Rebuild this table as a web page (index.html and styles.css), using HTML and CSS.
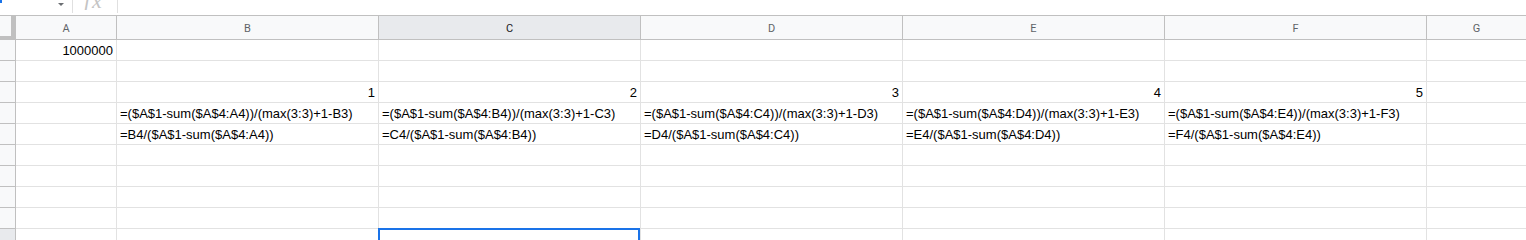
FILE: index.html
```html
<!DOCTYPE html>
<html>
<head>
<meta charset="utf-8">
<link rel="stylesheet" href="styles.css">
</head>
<body>
<div class="toolbar">
  <div class="namebox"><span class="focus"></span><span class="caret"></span></div>
  <div class="sep"></div>
  <div class="fx">fx</div>
  <div class="sep"></div>
</div>
<div class="sheet">
  <div class="corner"></div>
  <div class="ch">A</div>
  <div class="ch">B</div>
  <div class="ch ch-sel">C</div>
  <div class="ch">D</div>
  <div class="ch">E</div>
  <div class="ch">F</div>
  <div class="ch ch-last">G</div>

  <div class="rh"></div>
  <div class="cell num">1000000</div>
  <div class="cell"></div><div class="cell"></div><div class="cell"></div><div class="cell"></div><div class="cell"></div><div class="cell last"></div>

  <div class="rh"></div>
  <div class="cell"></div><div class="cell"></div><div class="cell"></div><div class="cell"></div><div class="cell"></div><div class="cell"></div><div class="cell last"></div>

  <div class="rh"></div>
  <div class="cell"></div>
  <div class="cell num">1</div>
  <div class="cell num">2</div>
  <div class="cell num">3</div>
  <div class="cell num">4</div>
  <div class="cell num">5</div>
  <div class="cell last"></div>

  <div class="rh"></div>
  <div class="cell"></div>
  <div class="cell">=($A$1-sum($A$4:A4))/(max(3:3)+1-B3)</div>
  <div class="cell">=($A$1-sum($A$4:B4))/(max(3:3)+1-C3)</div>
  <div class="cell">=($A$1-sum($A$4:C4))/(max(3:3)+1-D3)</div>
  <div class="cell">=($A$1-sum($A$4:D4))/(max(3:3)+1-E3)</div>
  <div class="cell">=($A$1-sum($A$4:E4))/(max(3:3)+1-F3)</div>
  <div class="cell last"></div>

  <div class="rh"></div>
  <div class="cell"></div>
  <div class="cell">=B4/($A$1-sum($A$4:A4))</div>
  <div class="cell">=C4/($A$1-sum($A$4:B4))</div>
  <div class="cell">=D4/($A$1-sum($A$4:C4))</div>
  <div class="cell">=E4/($A$1-sum($A$4:D4))</div>
  <div class="cell">=F4/($A$1-sum($A$4:E4))</div>
  <div class="cell last"></div>

  <div class="rh"></div>
  <div class="cell"></div><div class="cell"></div><div class="cell"></div><div class="cell"></div><div class="cell"></div><div class="cell"></div><div class="cell last"></div>

  <div class="rh"></div>
  <div class="cell"></div><div class="cell"></div><div class="cell"></div><div class="cell"></div><div class="cell"></div><div class="cell"></div><div class="cell last"></div>

  <div class="rh"></div>
  <div class="cell"></div><div class="cell"></div><div class="cell"></div><div class="cell"></div><div class="cell"></div><div class="cell"></div><div class="cell last"></div>

  <div class="rh"></div>
  <div class="cell"></div><div class="cell"></div><div class="cell"></div><div class="cell"></div><div class="cell"></div><div class="cell"></div><div class="cell last"></div>

  <div class="rh rh-sel"></div>
  <div class="cell"></div><div class="cell"></div>
  <div class="cell active"><div class="selbox"></div></div>
  <div class="cell"></div><div class="cell"></div><div class="cell"></div><div class="cell last"></div>
</div>
</body>
</html>
```

FILE: styles.css
```css
html, body {
  margin: 0;
  padding: 0;
  background: #ffffff;
  overflow: hidden;
  width: 1526px;
  height: 240px;
}

.toolbar {
  height: 15px;
  display: flex;
  align-items: flex-start;
  overflow: hidden;
  background: #ffffff;
}

.namebox {
  width: 72px;
  height: 15px;
  display: flex;
  align-items: flex-start;
  position: relative;
}

.focus {
  position: absolute;
  left: 0;
  top: 0;
  width: 2px;
  height: 3px;
  background: #1a73e8;
}

.caret {
  margin-left: auto;
  margin-right: 8px;
  margin-top: 3px;
  width: 0;
  height: 0;
  border-left: 3px solid transparent;
  border-right: 3px solid transparent;
  border-top: 3px solid #6b6e72;
}

.sep {
  width: 1px;
  height: 13px;
  background: #e0e0e0;
}

.fx {
  width: 44px;
  height: 10px;
  box-sizing: border-box;
  padding-left: 11px;
  font-family: "Liberation Serif", serif;
  font-style: italic;
  font-size: 22px;
  line-height: 18px;
  letter-spacing: 2px;
  color: #c4c4c4;
  overflow: hidden;
  display: flex;
  align-items: flex-end;
}

.sheet {
  display: grid;
  grid-template-columns: 16px 101px repeat(5, 262px) 99px;
  grid-auto-rows: 21px;
  grid-template-rows: 24px;
  border-top: 1px solid #c0c0c0;
  width: 1526px;
  height: 224px;
  overflow: hidden;
}

.corner {
  box-sizing: border-box;
  background: #f8f9fa;
  border-right: 5px solid #c0c0c0;
  border-bottom: 4px solid #c0c0c0;
}

.ch {
  box-sizing: border-box;
  background: #f8f9fa;
  border-right: 1px solid #c0c0c0;
  border-bottom: 1px solid #c0c0c0;
  font-family: Roboto, "Liberation Sans", Arial, sans-serif;
  font-size: 11px;
  color: #5f6368;
  display: flex;
  align-items: center;
  justify-content: center;
  padding-top: 1px;
}

.ch-sel {
  background: #e8eaed;
  color: #202124;
}

.ch-last {
  border-right: none;
}

.rh {
  box-sizing: border-box;
  background: #f8f9fa;
  border-right: 1px solid #c0c0c0;
  border-bottom: 1px solid #c0c0c0;
}

.rh-sel {
  background: #e8eaed;
}

.cell {
  box-sizing: border-box;
  border-right: 1px solid #e2e2e2;
  border-bottom: 1px solid #e2e2e2;
  font-family: "Liberation Sans", Arial, sans-serif;
  font-size: 13px;
  line-height: 16px;
  color: #000000;
  padding: 0 3px 1px 3px;
  display: flex;
  align-items: flex-end;
  white-space: nowrap;
  overflow: hidden;
}

.last {
  border-right: none;
}

.num {
  justify-content: flex-end;
}

.active {
  position: relative;
  overflow: visible;
}

.selbox {
  position: absolute;
  left: -1px;
  top: -1px;
  right: 0;
  height: 40px;
  border: 2px solid #1a73e8;
  box-sizing: border-box;
}
```
